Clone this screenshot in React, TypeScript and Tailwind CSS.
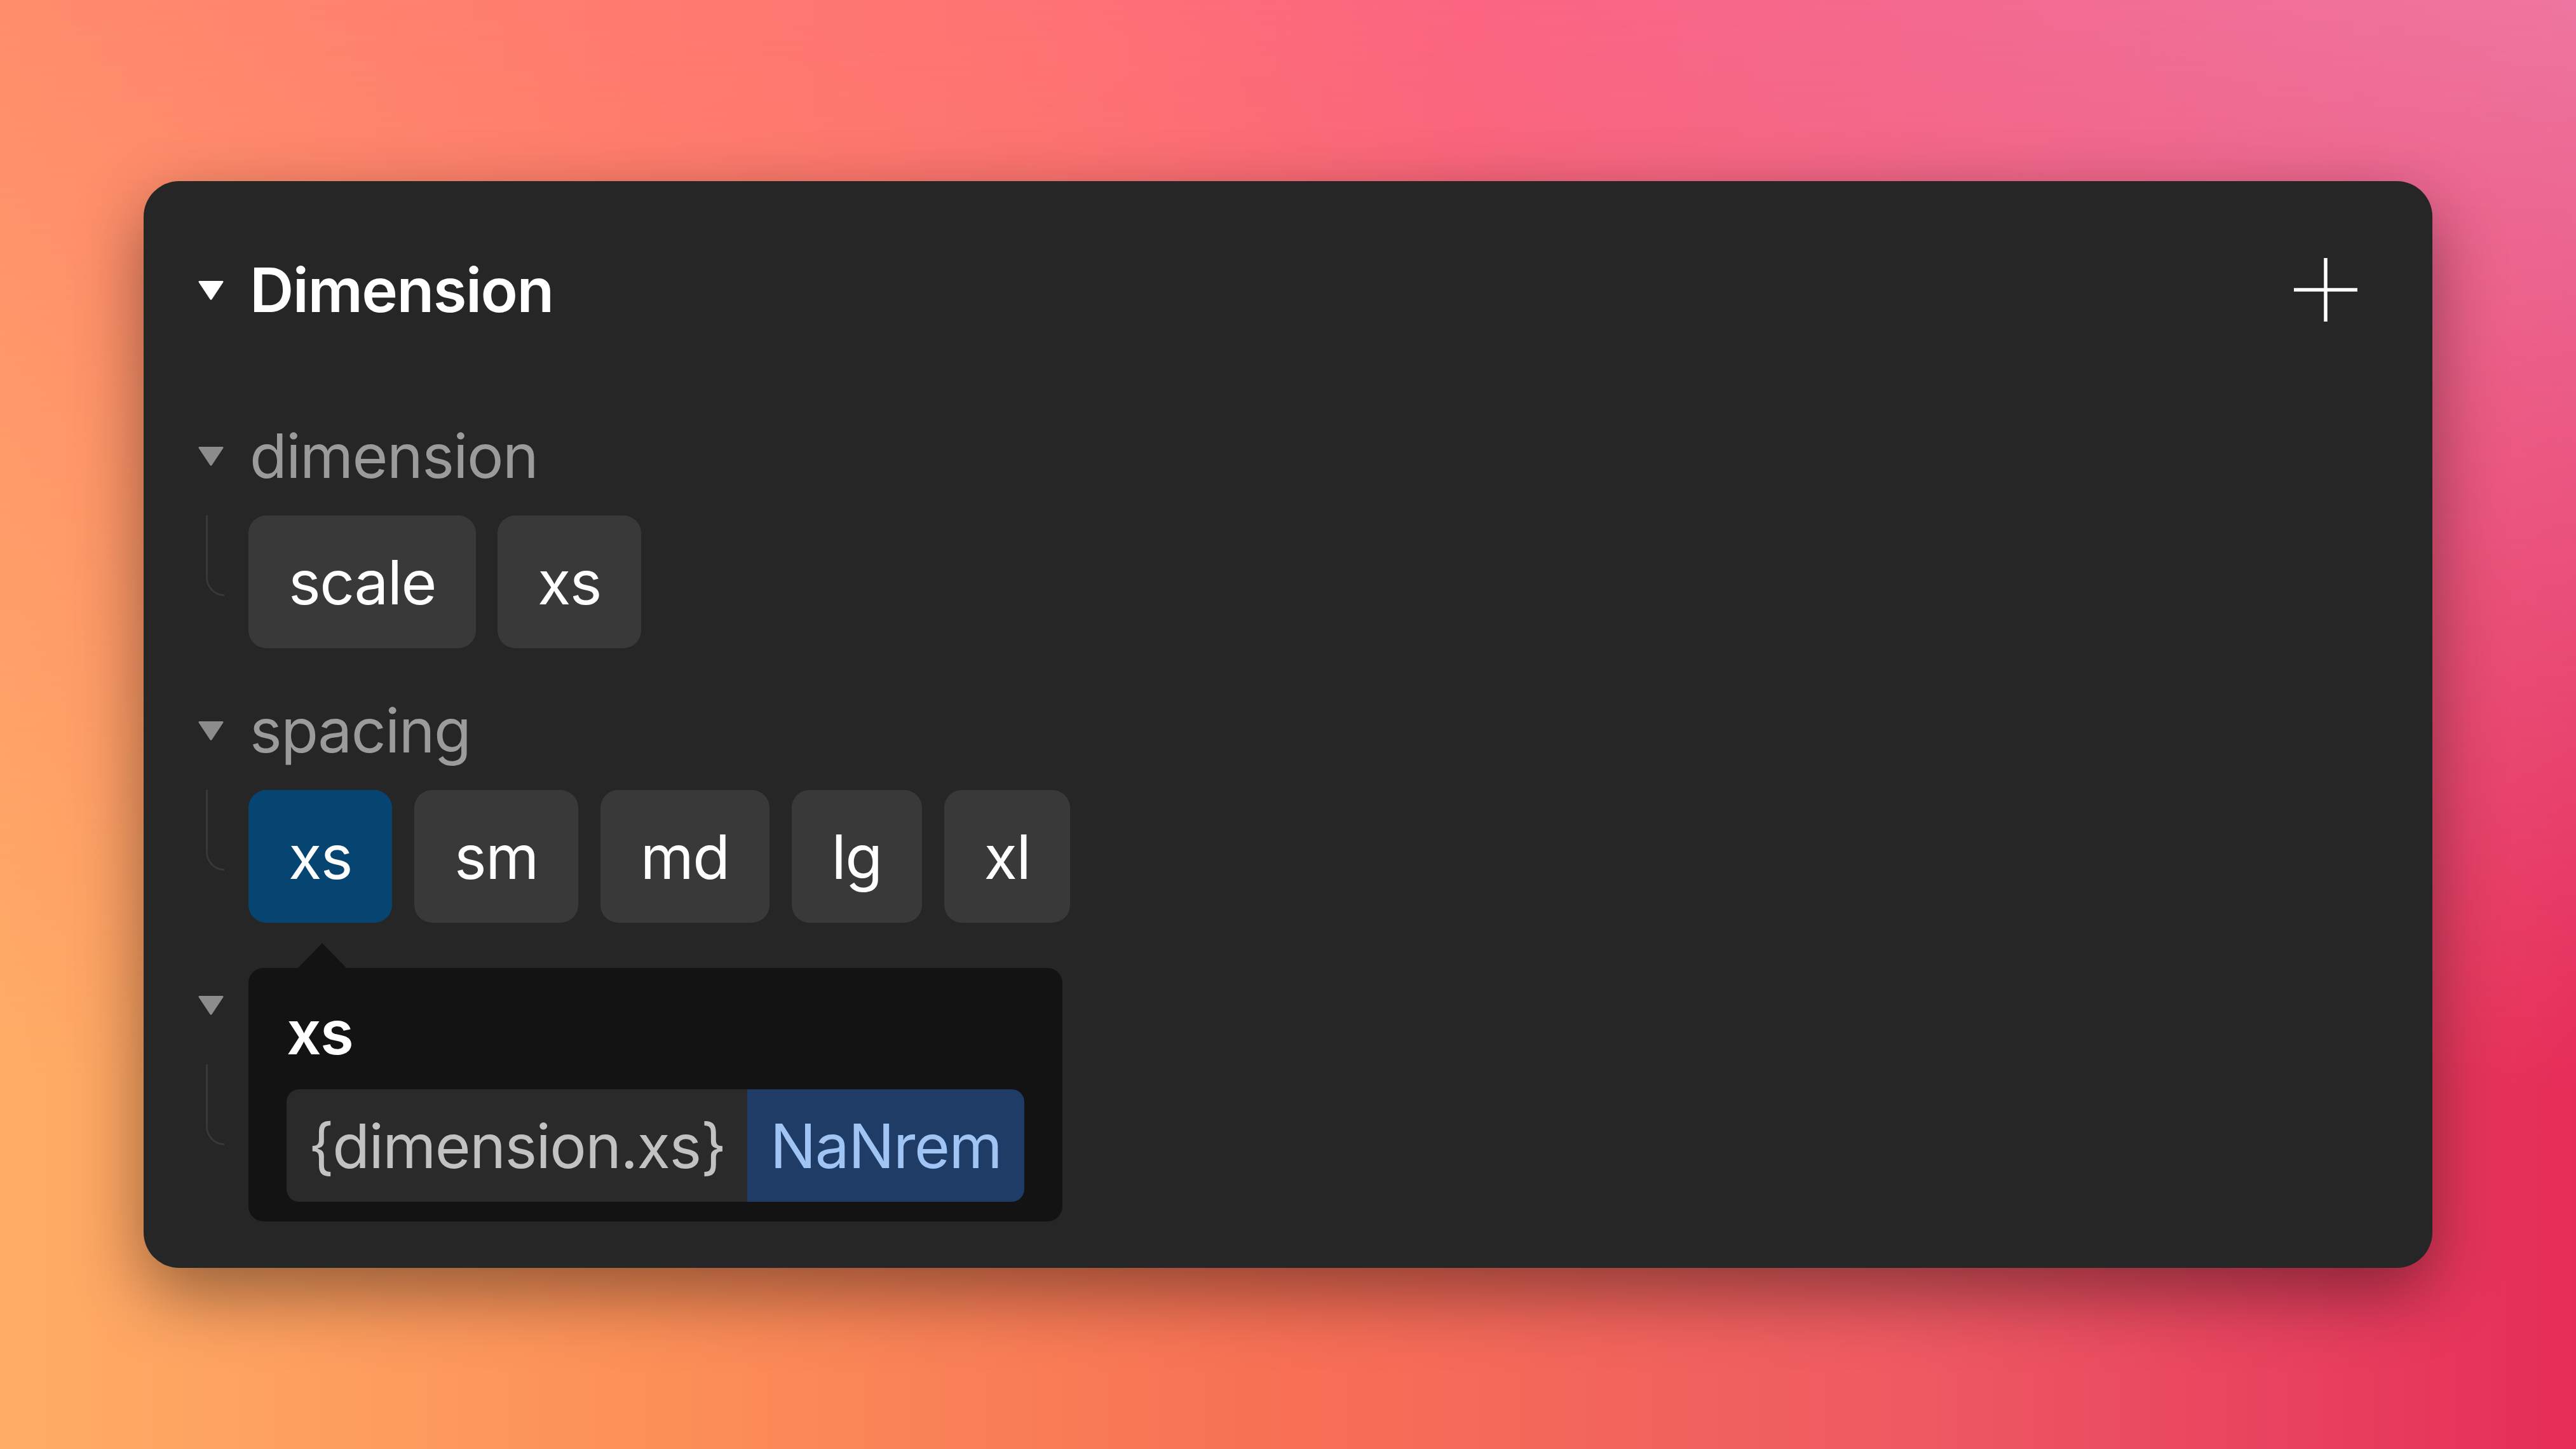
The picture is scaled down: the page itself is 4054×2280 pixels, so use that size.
import React from "react";

const Tri = ({ className }: { className: string }) => (
  <svg width="42" height="33" viewBox="0 0 42 33" className={className}>
    <path
      d="M3 2 H39 Q41.5 2 40 4.5 L22.6 30.8 Q21 33 19.4 30.8 L2 4.5 Q0.5 2 3 2 Z"
      fill="currentColor"
    />
  </svg>
);

const TreeLine = () => (
  <div className="w-[80px] shrink-0 pl-[13px]">
    <div className="w-[29px] h-[127px] border-l-[3px] border-b-[3px] border-[#383838] rounded-bl-[29px]" />
  </div>
);

const Chip = ({
  label,
  selected,
  children,
}: {
  label: string;
  selected?: boolean;
  children?: React.ReactNode;
}) => (
  <div
    className={`relative flex h-[209px] items-center rounded-[28px] px-[63px] text-white ${
      selected ? "bg-[#064471]" : "bg-[#393939]"
    }`}
  >
    <span className="leading-none">{label}</span>
    {children}
  </div>
);

const GroupLabel = ({ label }: { label: string }) => (
  <div className="flex h-[96px] items-center gap-[40px]">
    <Tri className="text-[#8c8c8c]" />
    <span className="leading-none text-[#9b9b9b]">{label}</span>
  </div>
);

const Tooltip = () => (
  <div className="absolute left-0 top-[280px] z-10 whitespace-nowrap rounded-[24px] bg-[#131313] px-[60px] pb-[31px] pt-[53px]">
    <div className="absolute left-[78px] top-[-39px] h-0 w-0 border-x-[38px] border-b-[39px] border-x-transparent border-b-[#131313]" />
    <div className="font-semibold leading-none text-white">xs</div>
    <div className="mt-[42px] flex h-[177px] overflow-hidden rounded-[20px]">
      <div className="flex items-center bg-[#2a2a2a] px-[34px] text-[#c2c2c2]">
        {"{dimension.xs}"}
      </div>
      <div className="flex items-center bg-[#1f3c66] px-[36px] text-[#a0c4f4]">
        NaNrem
      </div>
    </div>
  </div>
);

export default function App() {
  return (
    <div className="relative h-[2280px] w-full overflow-hidden bg-[image:linear-gradient(to_right,#ff8d6c_0%,#ff7a70_25%,#fe7374_40%,#fb6582_57%,#f46a90_75%,#ee76a0_100%)] font-['Inter','Liberation_Sans',sans-serif]">
      <div className="absolute inset-0 bg-[image:linear-gradient(to_right,#ffad66_0%,#fc9058_25%,#f77055_50%,#ee5a62_74%,#e8405e_90%,#e52d58_100%)] [mask-image:linear-gradient(to_bottom,transparent_0%,black_75%)]" />
      <div className="relative flex h-full w-full items-center justify-center">
        <div className="w-[3602px] rounded-[56px] bg-[#262626] pb-[111px] pl-[85px] pr-[118px] pt-[121px] text-[96px] tracking-[-0.016em] shadow-[0_40px_110px_rgba(0,0,0,0.42)]">
          <div className="flex h-[100px] items-center justify-between">
            <div className="flex items-center gap-[40px]">
              <Tri className="text-white" />
              <span className="font-semibold leading-none text-white">Dimension</span>
            </div>
            <svg width="100" height="100" viewBox="0 0 100 100">
              <path d="M0 50 H100 M50 0 V100" stroke="#ffffff" strokeWidth="5.5" />
            </svg>
          </div>

          <div className="mt-[163px] flex flex-col">
            <GroupLabel label="dimension" />
            <div className="mt-[46px] flex">
              <TreeLine />
              <div className="flex gap-[34px]">
                <Chip label="scale" />
                <Chip label="xs" />
              </div>
            </div>
          </div>

          <div className="mt-[81px] flex flex-col">
            <GroupLabel label="spacing" />
            <div className="mt-[46px] flex">
              <TreeLine />
              <div className="flex gap-[35px]">
                <Chip label="xs" selected>
                  <Tooltip />
                </Chip>
                <Chip label="sm" />
                <Chip label="md" />
                <Chip label="lg" />
                <Chip label="xl" />
              </div>
            </div>
          </div>

          <div className="mt-[81px] flex flex-col">
            <div className="flex h-[96px] items-center">
              <Tri className="text-[#8c8c8c]" />
            </div>
            <div className="mt-[46px] flex">
              <TreeLine />
              <div className="h-[209px]" />
            </div>
          </div>
        </div>
      </div>
    </div>
  );
}
